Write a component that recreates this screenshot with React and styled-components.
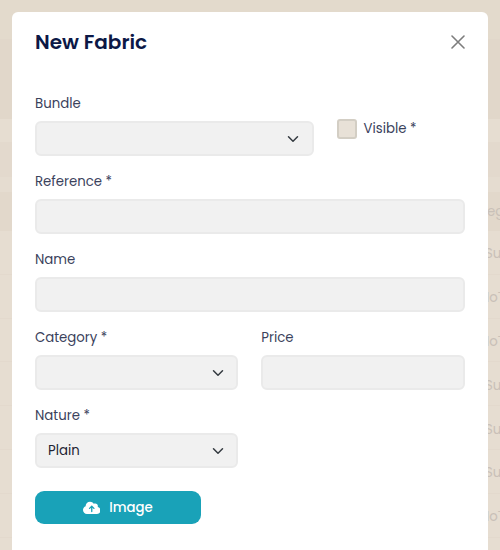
import React from "react";
import styled, { createGlobalStyle } from "styled-components";
import { FaCloudArrowUp } from "react-icons/fa6";

const GlobalStyle = createGlobalStyle`
  * { box-sizing: border-box; }
  body {
    margin: 0;
    overflow: hidden;
    background: #e6ddd1;
    font-family: Poppins, Inter, "Liberation Sans", sans-serif;
  }
`;

const Page = styled.div`
  position: relative;
  height: 550px;
  overflow: hidden;
`;

const Backdrop = styled.div`
  display: flex;
  flex-direction: column;
`;

const Band = styled.div`
  height: ${(p) => p.$height}px;
  background: ${(p) => p.$color};
`;

const TableRow = styled.div`
  display: flex;
  align-items: center;
  justify-content: flex-end;
  height: ${(p) => p.$height || 43.8}px;
  padding-top: ${(p) => (p.$head ? 1 : 4)}px;
  border-bottom: 1px solid ${(p) => (p.$head ? "#e2d8cb" : "#e3d9cd")};
  background: ${(p) => (p.$head ? "#e2d8cb" : "#e6ddd1")};
`;

const Cell = styled.span`
  width: ${(p) => p.$width || 15}px;
  white-space: nowrap;
  color: #c9c0b8;
  font-size: 13.3px;
  line-height: 20px;
`;

const Overlay = styled.div`
  position: absolute;
  inset: 0;
  padding: 12px 12.5px 0 12px;
`;

const Dialog = styled.section`
  height: 560px;
  padding: 0 23px;
  border-radius: 6px;
  background: #fff;
`;

const Header = styled.header`
  display: flex;
  align-items: center;
  justify-content: space-between;
  height: 60px;
  margin-bottom: 21px;
`;

const Title = styled.h1`
  margin: 0;
  color: #0c1846;
  font-size: 20px;
  font-weight: 600;
  line-height: 30px;
`;

const CloseButton = styled.button`
  display: flex;
  padding: 0;
  border: 0;
  background: none;
  color: #7d7d7d;
`;

const Form = styled.form`
  display: flex;
  flex-direction: column;
  gap: 15px;
`;

const Row = styled.div`
  display: grid;
  grid-template-columns: ${(p) => p.$columns || "1fr"};
  column-gap: 23px;
`;

const Field = styled.div`
  display: flex;
  flex-direction: column;
  gap: 6px;
`;

const Label = styled.label`
  color: #3b425c;
  font-size: 13.3px;
  line-height: 22px;
  white-space: nowrap;
`;

const Control = styled.div`
  display: flex;
  align-items: center;
  justify-content: space-between;
  height: 35px;
  padding: 0 12.5px 0 11px;
  border: 2px solid #eaeaea;
  border-radius: 6px;
  background: #f1f1f1;
  color: #1f2433;
  font-size: 13.3px;
`;

const CheckField = styled.div`
  display: flex;
  align-items: center;
  gap: 7px;
  height: 20px;
  margin-top: 26px;
`;

const Checkbox = styled.span`
  width: 20px;
  height: 20px;
  border: 2px solid #d3cec4;
  border-radius: 3px;
  background: #e8e1d7;
`;

const UploadButton = styled.button`
  display: flex;
  align-items: center;
  justify-content: center;
  gap: 9px;
  width: 165.5px;
  height: 33px;
  margin-top: 8px;
  padding: 0;
  border: 0;
  border-radius: 9px;
  background: #19a2b8;
  color: #fff;
  font: 500 13.3px Poppins, Inter, sans-serif;
`;

const Chevron = () => (
  <svg width="12" height="12" viewBox="0 0 16 16" fill="none" stroke="#343a40" strokeWidth="2" strokeLinecap="round" strokeLinejoin="round">
    <path d="m2 5 6 6 6-6" />
  </svg>
);

const CloseIcon = () => (
  <svg width="14" height="14" viewBox="0 0 14 14" fill="none" stroke="currentColor" strokeWidth="1.6" strokeLinecap="round">
    <path d="M1 1l12 12M13 1 1 13" />
  </svg>
);

const TextField = ({ label }) => (
  <Field>
    <Label>{label}</Label>
    <Control />
  </Field>
);

const SelectField = ({ label, value }) => (
  <Field>
    <Label>{label}</Label>
    <Control>
      <span>{value}</span>
      <Chevron />
    </Control>
  </Field>
);

const rows = ["Su", "IoT", "IoT", "Su", "Su", "Su", "IoT"];

export default function App() {
  return (
    <>
      <GlobalStyle />
      <Page>
        <Backdrop>
          <Band $height={39} $color="#e3dacc" />
          <Band $height={80} $color="#e1d7ca" />
          <Band $height={23} $color="#e6ddd1" />
          <Band $height={35} $color="#e3d9cd" />
          <Band $height={15} $color="#e5dcd0" />
          <TableRow $head $height={39}>
            <Cell $width={13}>eg</Cell>
          </TableRow>
          {rows.map((text, i) => (
            <TableRow key={i}>
              <Cell $width={text === "Su" ? 15 : 14}>{text}</Cell>
            </TableRow>
          ))}
        </Backdrop>
        <Overlay>
          <Dialog>
            <Header>
              <Title>New Fabric</Title>
              <CloseButton type="button" aria-label="Close">
                <CloseIcon />
              </CloseButton>
            </Header>
            <Form>
              <Row $columns="278.5px 1fr">
                <SelectField label="Bundle" />
                <CheckField>
                  <Checkbox />
                  <Label>Visible *</Label>
                </CheckField>
              </Row>
              <TextField label="Reference *" />
              <TextField label="Name" />
              <Row $columns="1fr 1fr">
                <SelectField label="Category *" />
                <TextField label="Price" />
              </Row>
              <Row $columns="1fr 1fr">
                <SelectField label="Nature *" value="Plain" />
              </Row>
              <UploadButton type="button">
                <FaCloudArrowUp size={17.5} />
                Image
              </UploadButton>
            </Form>
          </Dialog>
        </Overlay>
      </Page>
    </>
  );
}
